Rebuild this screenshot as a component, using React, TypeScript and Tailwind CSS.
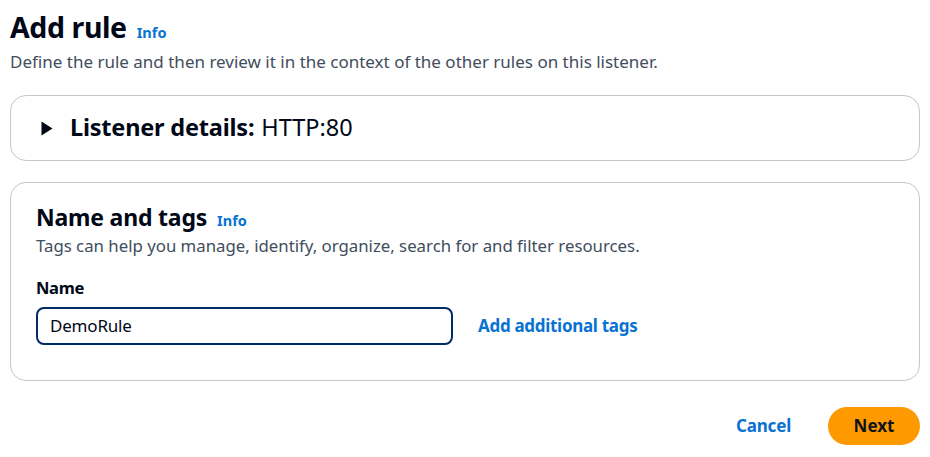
export default function App() {
  return (
    <div className="min-h-[457px] w-[930px] bg-white px-[10px] pt-[9px] text-[#000716] [font-family:'Noto_Sans',sans-serif]">
      <div className="flex items-baseline gap-[10px]">
        <h1 className="text-[28.5px] font-bold leading-[36px] tracking-[-0.4px]">Add rule</h1>
        <a className="text-[14.5px] font-bold text-[#0972d3]">Info</a>
      </div>
      <p className="mt-[5px] text-[17px] leading-[24px] text-[#414d5c]">
        Define the rule and then review it in the context of the other rules on this listener.
      </p>

      <div className="mt-[21px] flex h-[66px] items-center rounded-[16px] border border-[#c6c6cd] pl-[30px]">
        <svg width="12" height="15" viewBox="0 0 12 15" className="mr-[17px]">
          <path d="M0.5 0.5 L11.5 7.5 L0.5 14.5 Z" fill="#000716" />
        </svg>
        <span className="text-[23.5px] font-bold tracking-[-0.2px]">Listener details:</span>
        <span className="ml-[7px] text-[23.5px]">HTTP:80</span>
      </div>

      <div className="mt-[21px] h-[199px] rounded-[16px] border border-[#c6c6cd] px-[25px] pt-[19px]">
        <div className="flex items-baseline gap-[10px]">
          <h2 className="text-[23px] font-bold leading-[30px] tracking-[-0.2px]">Name and tags</h2>
          <a className="text-[14.5px] font-bold text-[#0972d3]">Info</a>
        </div>
        <p className="mt-[2px] text-[16.8px] leading-[24px] text-[#414d5c]">
          Tags can help you manage, identify, organize, search for and filter resources.
        </p>
        <div className="mt-[19px] text-[16.5px] font-bold leading-[22px] tracking-[-0.3px]">Name</div>
        <div className="mt-[8px] flex items-center">
          <div className="flex h-[38px] w-[417px] items-center rounded-[8px] border-2 border-[#002b66] px-[12px] text-[17px] tracking-[-0.2px]">
            DemoRule
          </div>
          <a className="ml-[25px] text-[17px] font-bold tracking-[-0.3px] text-[#0972d3]">Add additional tags</a>
        </div>
      </div>

      <div className="mt-[26px] flex items-center justify-end gap-[37px]">
        <button className="text-[17px] font-bold tracking-[-0.2px] text-[#0972d3]">Cancel</button>
        <button className="h-[38px] w-[92px] rounded-full bg-[#ff9900] text-[17px] font-bold text-[#0f141a]">Next</button>
      </div>
    </div>
  )
}
